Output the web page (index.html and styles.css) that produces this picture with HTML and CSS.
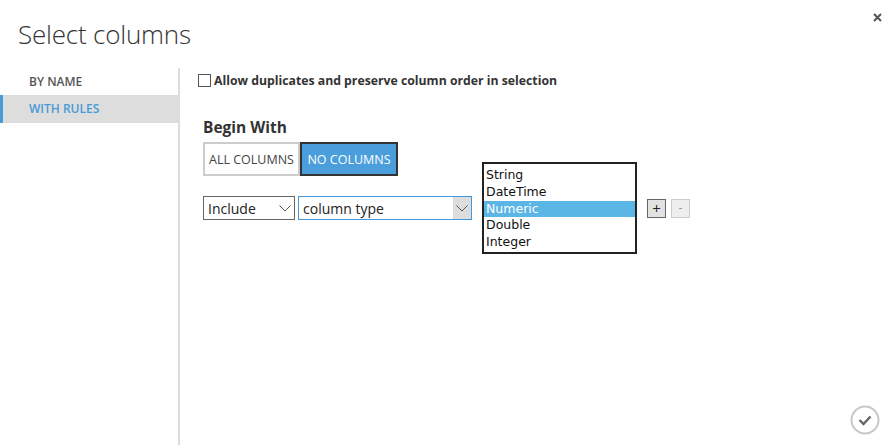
FILE: index.html
```html
<!DOCTYPE html>
<html>
<head>
<meta charset="utf-8">
<link rel="stylesheet" href="styles.css">
</head>
<body>
<div class="dialog">
  <h1 class="title">Select columns</h1>
  <button class="close" aria-label="Close">
    <svg width="9" height="9" viewBox="0 0 9 9"><path d="M1 1 L8 8 M8 1 L1 8" stroke="#555" stroke-width="2"/></svg>
  </button>
  <div class="main">
    <nav class="sidebar">
      <div class="nav-item">BY NAME</div>
      <div class="nav-item active">WITH RULES</div>
    </nav>
    <section class="content">
      <label class="check-row"><span class="checkbox"></span>Allow duplicates and preserve column order in selection</label>
      <h2 class="section-title">Begin With</h2>
      <div class="toggle">
        <span class="toggle-btn">ALL COLUMNS</span>
        <span class="toggle-btn selected">NO COLUMNS</span>
      </div>
      <div class="rule-row">
        <div class="select include">Include<span class="chev"><svg width="12" height="7" viewBox="0 0 12 7"><path d="M0.5 0.5 L6 6 L11.5 0.5" fill="none" stroke="#555" stroke-width="1"/></svg></span></div>
        <div class="select coltype">column type<span class="chev grey"><svg width="12" height="7" viewBox="0 0 12 7"><path d="M0.5 0.5 L6 6 L11.5 0.5" fill="none" stroke="#555" stroke-width="1"/></svg></span></div>
        <ul class="listbox">
          <li>String</li>
          <li>DateTime</li>
          <li class="hl">Numeric</li>
          <li>Double</li>
          <li>Integer</li>
        </ul>
        <span class="sq-btn plus">+</span>
        <span class="sq-btn minus">-</span>
      </div>
    </section>
  </div>
  <button class="ok" aria-label="OK">
    <svg width="30" height="30" viewBox="0 0 30 30"><circle cx="15" cy="15" r="13.5" fill="none" stroke="#c8c8c8" stroke-width="2"/><path d="M9.5 15 L13.5 19 L20.5 11.5" fill="none" stroke="#666" stroke-width="2.4"/></svg>
  </button>
</div>
</body>
</html>
```
FILE: styles.css
```css
html, body { margin: 0; padding: 0; background: #fff; }
body { font-family: "Open Sans", "Noto Sans", sans-serif; color: #333; }
.dialog { position: relative; width: 894px; height: 445px; overflow: hidden; display: flex; flex-direction: column; }
.title { margin: 0; padding: 15px 0 0 18px; font-size: 26px; font-weight: 300; line-height: 38px; color: #333; height: 53px; box-sizing: content-box; letter-spacing: -0.2px; }
.close { position: absolute; top: 13px; right: 12px; border: 0; background: none; padding: 0; width: 9px; height: 9px; }
.close svg { display: block; }
.main { display: flex; flex: 1; }
.sidebar { width: 178px; border-right: 2px solid #ddd; }
.nav-item { height: 27px; line-height: 27px; padding-left: 29px; font-size: 12px; font-weight: 600; color: #555; }
.nav-item.active { height: 28px; line-height: 28px; background: #ddd; color: #4a9ad6; box-shadow: inset 3px 0 0 #4a9ad6; }
.content { flex: 1; padding: 4px 0 0 18px; }
.check-row { display: flex; align-items: center; font-size: 12.25px; font-weight: 700; color: #333; height: 16px; }
.checkbox { width: 11px; height: 11px; border: 1px solid #555; margin-right: 3px; background: #fff; }
.section-title { margin: 29px 0 0 5px; font-size: 15.5px; font-weight: 700; line-height: 20px; color: #333; }
.toggle { display: flex; margin: 5px 0 0 5px; }
.toggle-btn { box-sizing: border-box; height: 34px; width: 97px; display: flex; align-items: center; justify-content: center; font-size: 12.5px; color: #444; border: 2px solid #ccc; background: #fff; }
.toggle-btn.selected { width: 98px; background: #4a9edb; color: #fff; border-color: #333; }
.rule-row { display: flex; align-items: center; margin: 20px 0 0 5px; }
.select { box-sizing: border-box; position: relative; height: 24px; display: flex; align-items: center; padding-left: 4px; font-size: 14px; color: #222; border: 1px solid #666; }
.select.include { width: 92px; }
.select.coltype { width: 174px; margin-left: 3px; border-color: #3c9be0; }
.chev { position: absolute; right: 0; top: 0; bottom: 0; width: 18px; display: flex; align-items: center; justify-content: center; }
.chev.grey { background: #ddd; width: 18px; }
.chev svg { display: block; }
.listbox { list-style: none; margin: -34px 0 -34px 10px; padding: 3px 0 1px; box-sizing: border-box; width: 155px; height: 92px; border: 2px solid #222; font-family: "DejaVu Sans", Verdana, sans-serif; font-size: 12.5px; color: #111; }
.listbox li { height: 16.8px; line-height: 16.8px; padding-left: 2px; }
.listbox li.hl { background: #5bb5e5; color: #fff; }
.sq-btn { box-sizing: border-box; width: 19px; height: 19px; display: flex; align-items: center; justify-content: center; font-size: 15px; line-height: 1; }
.plus { margin-left: 10px; border: 1px solid #666; background: #e2e2e2; color: #222; }
.minus { margin-left: 5px; border: 1px solid #ccc; background: #eee; color: #999; font-size: 12px; }
.ok { position: absolute; right: 14px; bottom: 10px; border: 0; background: none; padding: 0; width: 30px; height: 30px; }
.ok svg { display: block; }
```
